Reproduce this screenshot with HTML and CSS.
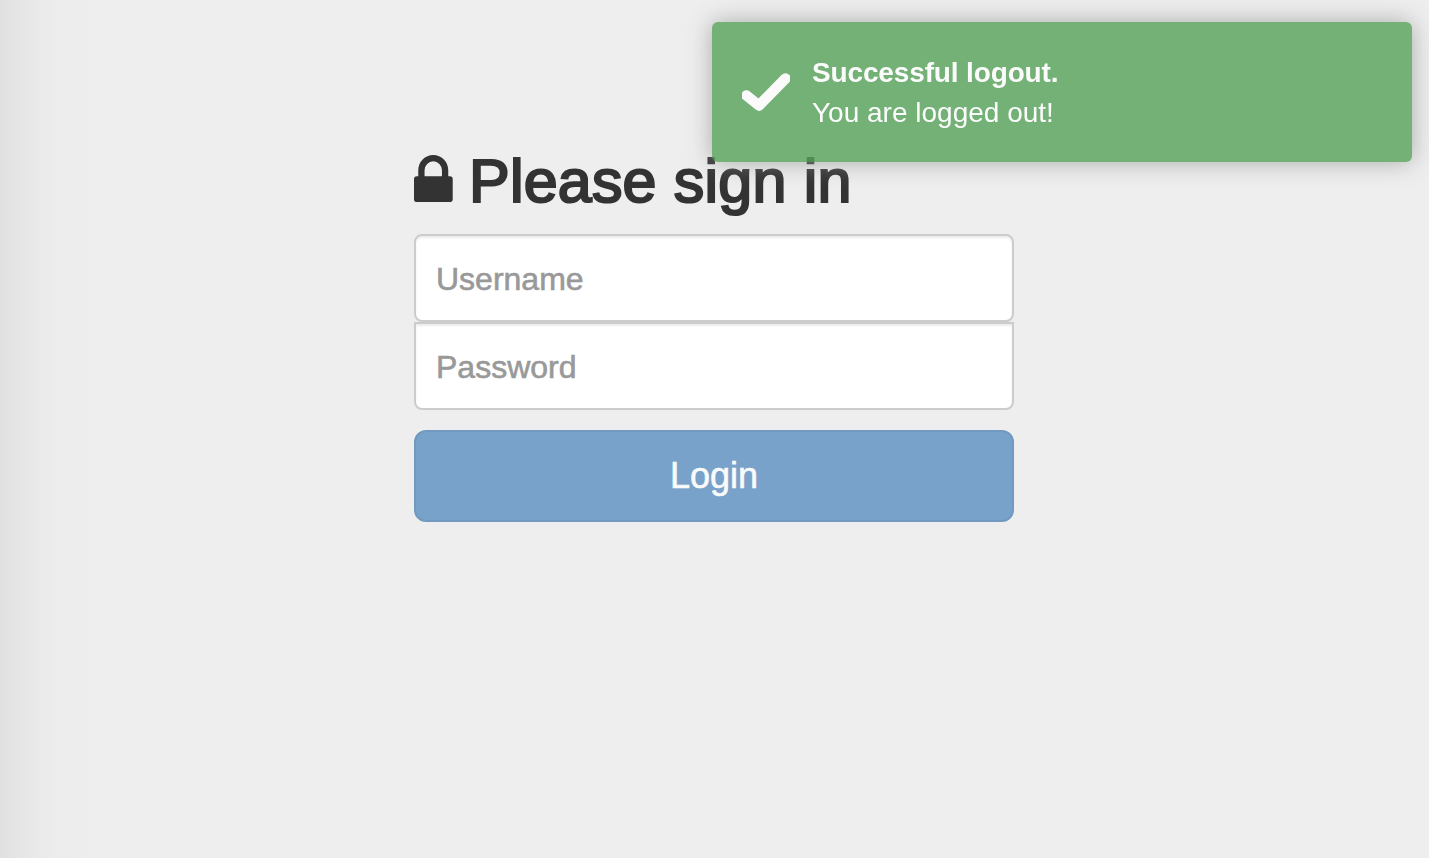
FILE: index.html
```html
<!DOCTYPE html>
<html lang="en">
<head>
<meta charset="utf-8">
<title>Please sign in</title>
<link rel="stylesheet" href="styles.css">
</head>
<body>
<main class="page">
  <form class="signin">
    <h2 class="heading">
      <svg class="lock" viewBox="0 0 39 47" width="39" height="47" aria-hidden="true">
        <path d="M7.4 25V15.3a11.8 12.1 0 0 1 23.7 0V25" fill="none" stroke="#333" stroke-width="6.3"/>
        <rect y="21.3" width="38.7" height="25.7" rx="2.8" fill="#333"/>
      </svg>
      <span class="title">Please sign in</span>
    </h2>
    <input class="field" type="text" placeholder="Username">
    <input class="field password" type="password" placeholder="Password">
    <button class="login" type="button"><span class="login-text">Login</span></button>
  </form>
</main>
<div class="toast">
  <svg class="check" viewBox="0 0 48 40" width="48" height="40" aria-hidden="true">
    <path d="M4.5 23.5L17 33.5 43.5 6.5" fill="none" stroke="#fff" stroke-width="10.5" stroke-linecap="round" stroke-linejoin="round"/>
  </svg>
  <div class="message">
    <div><span class="toast-title">Successful logout.</span></div>
    <div><span class="toast-text">You are logged out!</span></div>
  </div>
</div>
</body>
</html>
```
FILE: styles.css
```css
* { box-sizing: border-box; }
body {
  margin: 0;
  height: 858px;
  overflow: hidden;
  background: linear-gradient(90deg, #e0e0e0 0, #e5e5e5 18px, #eaeaea 40px, #ececec 58px, #eee 90px) #eee;
  color: #333;
  font-family: "Liberation Sans", Arial, sans-serif;
}
.page {
  padding: 147px 0 0 414px;
}
.signin {
  width: 600px;
  display: flex;
  flex-direction: column;
}
.heading {
  display: flex;
  align-items: flex-start;
  gap: 16px;
  height: 66px;
  margin: 0 0 21px;
  font-size: 61px;
  line-height: 68px;
  font-weight: 400;
}
.lock { margin-top: 8px; flex: none; }
.title {
  white-space: nowrap;
  letter-spacing: 0.2px;
  -webkit-text-stroke: 2.2px #333;
}
.field {
  width: 600px;
  height: 88px;
  padding: 2px 20px 0;
  border: 2px solid #ccc;
  border-radius: 8px;
  background: #fff;
  box-shadow: inset 0 2px 2px rgba(0, 0, 0, .075);
  font: 32px "Liberation Sans", Arial, sans-serif;
  outline: 0;
}
.field::placeholder { color: #999; opacity: 1; -webkit-text-stroke: 0.6px #999; }
.password {
  margin-bottom: 20px;
  border-top-left-radius: 0;
  border-top-right-radius: 0;
}
.login {
  height: 92px;
  padding: 0;
  border: 2px solid #7299bf;
  border-radius: 12px;
  background: #78a2c9;
  color: #fafafa;
  font: 36px "Liberation Sans", Arial, sans-serif;
  -webkit-text-stroke: 0.6px #fafafa;
}
.toast {
  position: absolute;
  top: 22px;
  right: 17px;
  width: 700px;
  height: 140px;
  padding: 31px 30px 29px;
  display: flex;
  gap: 22px;
  border-radius: 6px;
  background: #56a359;
  box-shadow: 0 0 24px #999;
  color: #fff;
  opacity: .8;
}
.check { margin-top: 19px; filter: blur(.6px); }
.message {
  font-size: 28px;
  line-height: 40px;
  white-space: nowrap;
}
.toast-title { font-weight: 700; letter-spacing: -0.14px; }
```
